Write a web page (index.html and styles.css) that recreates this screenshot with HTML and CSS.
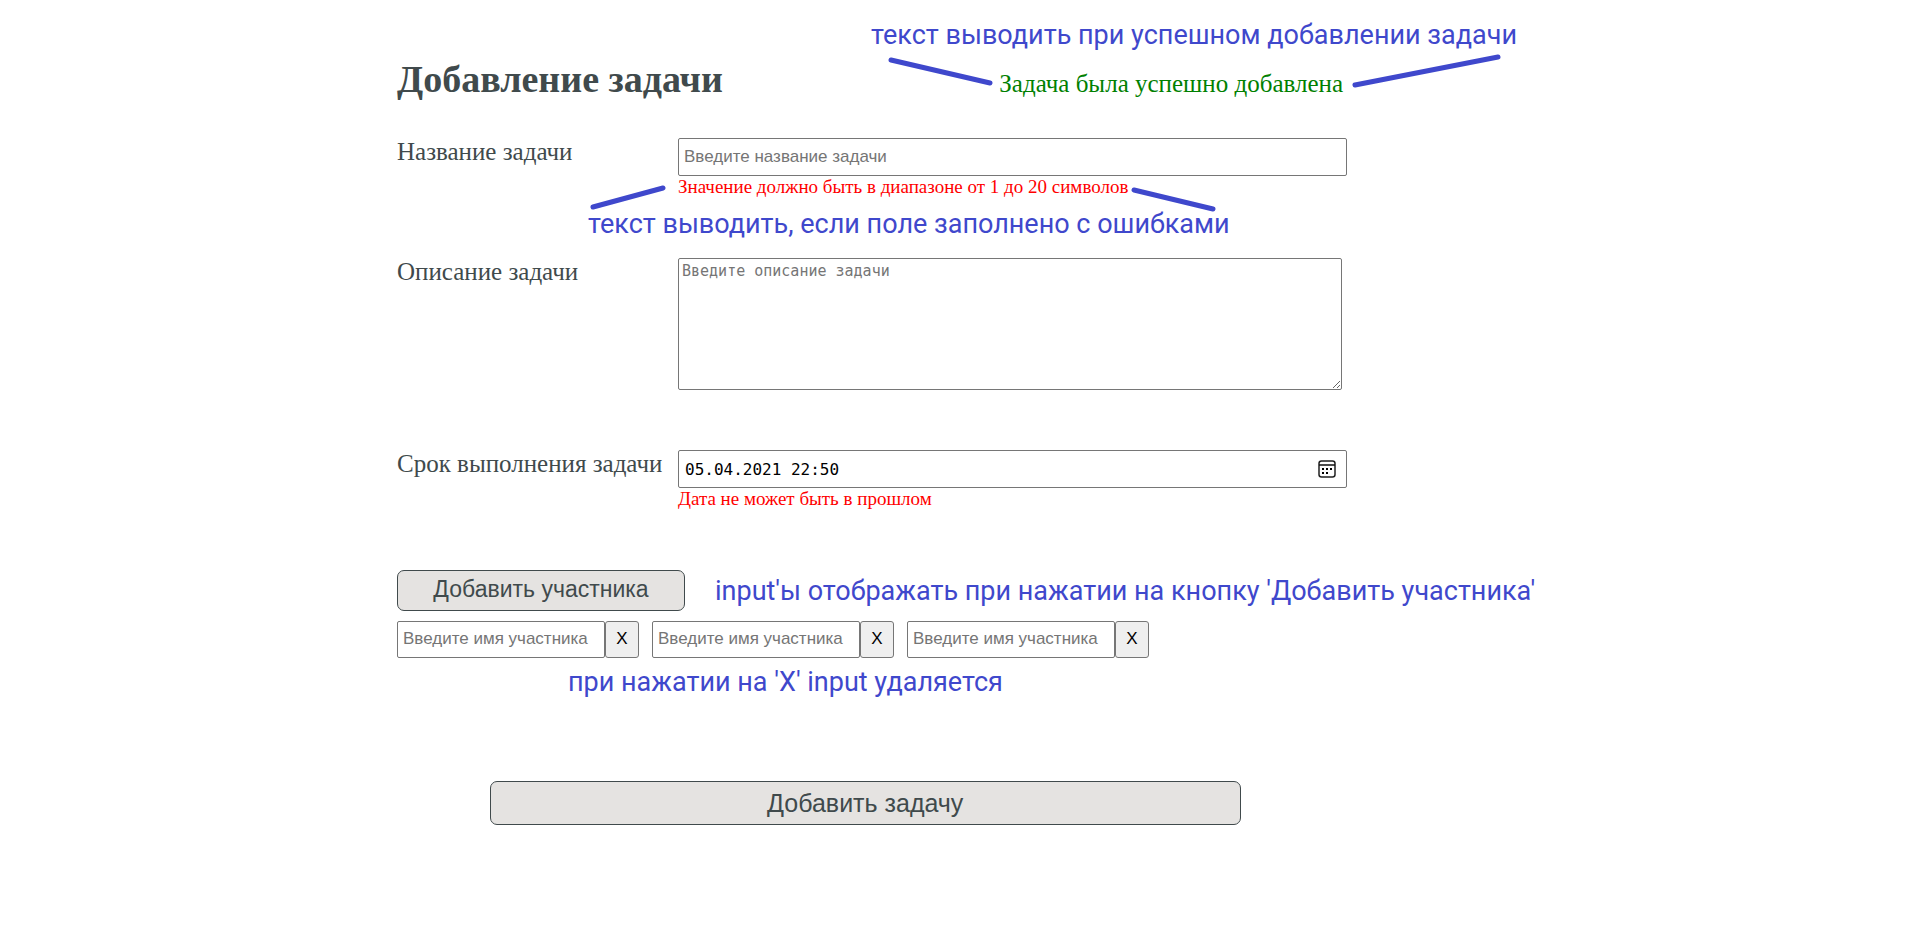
FILE: index.html
```html
<!DOCTYPE html>
<html lang="ru">
<head>
<meta charset="utf-8">
<title>Добавление задачи</title>
<link rel="stylesheet" href="styles.css">
</head>
<body>
<main class="page">
  <p class="note note-top">текст выводить при успешном добавлении задачи</p>
  <form class="form">
    <header class="head">
      <h1 class="title">Добавление задачи</h1>
      <p class="success">Задача была успешно добавлена
        <svg class="stroke stroke-success-left" width="106" height="30" viewBox="0 0 106 30" aria-hidden="true"><path d="M3 3L102 26"/></svg>
        <svg class="stroke stroke-success-right" width="150" height="34" viewBox="0 0 150 34" aria-hidden="true"><path d="M3 31L146 3"/></svg>
      </p>
    </header>
    <div class="row row-name">
      <label class="label" for="name">Название задачи</label>
      <div class="field">
        <input class="input" id="name" type="text" placeholder="Введите название задачи">
        <p class="error">Значение должно быть в диапазоне от 1 до 20 символов
          <svg class="stroke stroke-error-left" width="78" height="26" viewBox="0 0 78 26" aria-hidden="true"><path d="M3 22L73 3"/></svg>
          <svg class="stroke stroke-error-right" width="86" height="26" viewBox="0 0 86 26" aria-hidden="true"><path d="M3 3L82 22"/></svg>
        </p>
      </div>
    </div>
    <p class="note note-error">текст выводить, если поле заполнено с ошибками</p>
    <div class="row row-text">
      <label class="label" for="text">Описание задачи</label>
      <div class="field"><textarea class="textarea" id="text" placeholder="Введите описание задачи"></textarea></div>
    </div>
    <div class="row row-date">
      <label class="label" for="date">Срок выполнения задачи</label>
      <div class="field">
        <div class="date-box">
          <input class="input input-date" id="date" type="text" value="05.04.2021 22:50">
          <button class="calendar" type="button" aria-label="Календарь">
            <svg width="18" height="18" viewBox="0 0 18 18" aria-hidden="true"><rect x="1" y="1" width="16" height="16" rx="2.5" fill="none" stroke="#222" stroke-width="1.5"/><path d="M1 5H17" stroke="#111" stroke-width="1.5"/><path d="M4 8h2v2H4zM8 8h2v2H8zM12 8h2v2h-2zM4 12h2v2H4zM8 12h2v2H8z" fill="#000"/></svg>
          </button>
        </div>
        <p class="error">Дата не может быть в прошлом</p>
      </div>
    </div>
    <div class="adding">
      <button class="button button-add" type="button">Добавить участника</button>
      <p class="note">input'ы отображать при нажатии на кнопку 'Добавить участника'</p>
    </div>
    <div class="members">
      <div class="member"><input class="input input-member" type="text" aria-label="Участник 1" placeholder="Введите имя участника"><button class="remove" type="button">X</button></div>
      <div class="member"><input class="input input-member" type="text" aria-label="Участник 2" placeholder="Введите имя участника"><button class="remove" type="button">X</button></div>
      <div class="member"><input class="input input-member" type="text" aria-label="Участник 3" placeholder="Введите имя участника"><button class="remove" type="button">X</button></div>
    </div>
    <p class="note note-remove">при нажатии на 'X' input удаляется</p>
    <button class="button button-submit" type="submit">Добавить задачу</button>
  </form>
</main>
</body>
</html>
```
FILE: styles.css
```css
* { box-sizing: border-box; }
body {
  margin: 0;
  background: #fff;
  color: #404a4c;
  font-family: "Liberation Serif", "Times New Roman", serif;
  font-size: 25px;
  line-height: 28px;
}
h1, p { margin: 0; }
.page { max-width: 1124px; margin: 0 auto; padding-top: 18px; }
.form { max-width: 950px; }
.note {
  color: #3f48cc;
  font-family: Roboto, sans-serif;
  font-size: 27px;
  line-height: 34px;
  white-space: nowrap;
}
.note-top { padding-right: 4px; text-align: right; }
.head {
  display: flex;
  align-items: baseline;
  justify-content: space-between;
  padding: 4px 4px 0 0;
}
.title { font-size: 38px; line-height: 46px; }
.success { position: relative; color: #008000; }
.stroke {
  position: absolute;
  fill: none;
  stroke: #3f48cc;
  stroke-width: 5;
  stroke-linecap: round;
}
.stroke-success-left { right: 100%; top: -13px; margin-right: 5px; }
.stroke-success-right { left: 100%; top: -16px; margin-left: 9px; }
.stroke-error-left { right: 100%; top: 9px; margin-right: 10px; }
.stroke-error-right { left: 100%; top: 11px; margin-left: 3px; }
.row { display: grid; grid-template-columns: 281px minmax(0, 1fr); }
.row-name { padding-top: 36px; }
.row-text { padding-top: 17px; }
.row-date { padding-top: 60px; }
.input {
  display: block;
  width: 100%;
  height: 38px;
  padding: 0 5px;
  border: 1px solid #767676;
  border-radius: 2px;
  background: #fff;
  color: #000;
  font-family: "Liberation Sans", Arial, sans-serif;
  font-size: 17px;
}
.input::placeholder, .textarea::placeholder { color: #757575; }
.textarea {
  display: block;
  width: calc(100% - 5px);
  height: 132px;
  padding: 3px;
  border: 1px solid #767676;
  border-radius: 2px;
  font-family: "DejaVu Sans Mono", monospace;
  font-size: 15px;
  line-height: 18px;
}
.date-box { position: relative; }
.input-date { padding: 0 6px; font-family: "DejaVu Sans Mono", monospace; font-size: 16px; }
.calendar {
  position: absolute;
  top: 10px;
  right: 11px;
  display: flex;
  padding: 0;
  border: 0;
  background: none;
}
.error {
  position: relative;
  width: max-content;
  color: #f00;
  font-size: 19px;
  line-height: 22px;
}
.note-error { padding: 9px 0 0 191px; }
.adding { display: flex; align-items: center; gap: 30px; padding-top: 60px; }
.button {
  border: 1px solid #404a4c;
  border-radius: 7px;
  background: #e5e3e1;
  color: #404a4c;
  font-family: "Liberation Sans", Arial, sans-serif;
}
.button-add { flex: none; width: 288px; height: 41px; padding: 0 0 2px; font-size: 23px; }
.members { display: flex; gap: 13px; padding-top: 10px; }
.member { display: flex; }
.input-member { width: 208px; height: 37px; padding-bottom: 2px; }
.remove {
  width: 34px;
  padding: 0 0 2px;
  border: 1px solid #767676;
  border-radius: 3px;
  background: #efefef;
  color: #000;
  font-family: "Liberation Sans", Arial, sans-serif;
  font-size: 17px;
}
.note-remove { padding: 7px 0 0 171px; }
.button-submit {
  display: block;
  width: 79%;
  height: 44px;
  margin: 82px 0 0 93px;
  font-size: 25px;
}
```
